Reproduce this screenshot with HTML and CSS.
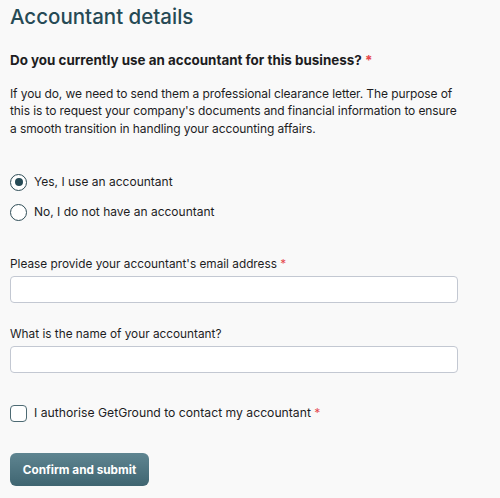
FILE: index.html
```html
<!DOCTYPE html>
<html lang="en">
<head>
<meta charset="utf-8">
<title>Accountant details</title>
<link rel="stylesheet" href="styles.css">
</head>
<body>
<main class="page">
  <h1 class="title">Accountant details</h1>
  <section class="question">
    <h2 class="q-title">Do you currently use an accountant for this business? <span class="req">*</span></h2>
    <p class="q-desc">If you do, we need to send them a professional clearance letter. The purpose of this is to request your company's documents and financial information to ensure a smooth transition in handling your accounting affairs.</p>
    <div class="radios">
      <label class="radio"><input type="radio" name="acc" class="radio-input" checked><span>Yes, I use an accountant</span></label>
      <label class="radio"><input type="radio" name="acc" class="radio-input"><span>No, I do not have an accountant</span></label>
    </div>
  </section>
  <div class="field field-first">
    <label class="field-label" for="email">Please provide your accountant's email address <span class="req">*</span></label>
    <input id="email" class="text-input" type="text">
  </div>
  <div class="field field-second">
    <label class="field-label" for="name">What is the name of your accountant?</label>
    <input id="name" class="text-input" type="text">
  </div>
  <label class="check"><input type="checkbox" class="check-input"><span>I authorise GetGround to contact my accountant <span class="req">*</span></span></label>
  <button class="btn" type="button">Confirm and submit</button>
</main>
</body>
</html>
```
FILE: styles.css
```css
html, body {
  margin: 0;
  padding: 0;
  background: #f9f9f9;
}
body {
  font-family: Inter, "Noto Sans", sans-serif;
  color: #1d1d1f;
}
.page {
  width: 448px;
  padding: 2.5px 0 0 10px;
  display: flex;
  flex-direction: column;
  align-items: flex-start;
}
.title {
  margin: 0;
  font-size: 20.5px;
  line-height: 28px;
  font-weight: 500;
  color: #264a55;
}
.question {
  display: flex;
  flex-direction: column;
}
.q-title {
  margin: 19.5px 0 0;
  font-size: 13.4px;
  line-height: 20px;
  font-weight: 700;
}
.req {
  color: #e5484d;
}
.q-desc {
  margin: 14.5px 0 0;
  font-size: 12px;
  line-height: 17.5px;
  letter-spacing: -0.1px;
}
.radios {
  margin-top: 35px;
  display: flex;
  flex-direction: column;
  gap: 10px;
}
.radio, .check {
  display: flex;
  align-items: center;
  gap: 7px;
  font-size: 12px;
  line-height: 20px;
}
.check {
  font-size: 12.2px;
}
.radio-input {
  appearance: none;
  -webkit-appearance: none;
  margin: 0;
  width: 17px;
  height: 17px;
  border: 1.5px solid #2f4d57;
  border-radius: 50%;
  background: #fff;
  display: grid;
  place-items: center;
  box-sizing: border-box;
}
.radio-input:checked::after {
  content: "";
  width: 8px;
  height: 8px;
  border-radius: 50%;
  background: #264a55;
}
.field {
  width: 100%;
  display: flex;
  flex-direction: column;
  gap: 2px;
}
.field-first {
  margin-top: 34px;
}
.field-second {
  margin-top: 23.5px;
}
.field-label {
  font-size: 11.8px;
  line-height: 17.5px;
}
.text-input {
  box-sizing: border-box;
  width: 100%;
  height: 27px;
  margin: 0;
  border: 1px solid #c3c8d2;
  border-radius: 4px;
  background: #fff;
}
.check {
  margin-top: 30.5px;
}
.check-input {
  appearance: none;
  -webkit-appearance: none;
  margin: 0;
  width: 17px;
  height: 17px;
  box-sizing: border-box;
  border: 1.5px solid #4d6a73;
  border-radius: 4px;
  background: #fff;
}
.btn {
  margin-top: 30px;
  height: 33px;
  width: 139px;
  padding: 0;
  border: none;
  border-radius: 6px;
  background: linear-gradient(#5f8591, #3f6571);
  color: #fff;
  font-family: Inter, "Noto Sans", sans-serif;
  font-size: 11.75px;
  font-weight: 700;
}
```
